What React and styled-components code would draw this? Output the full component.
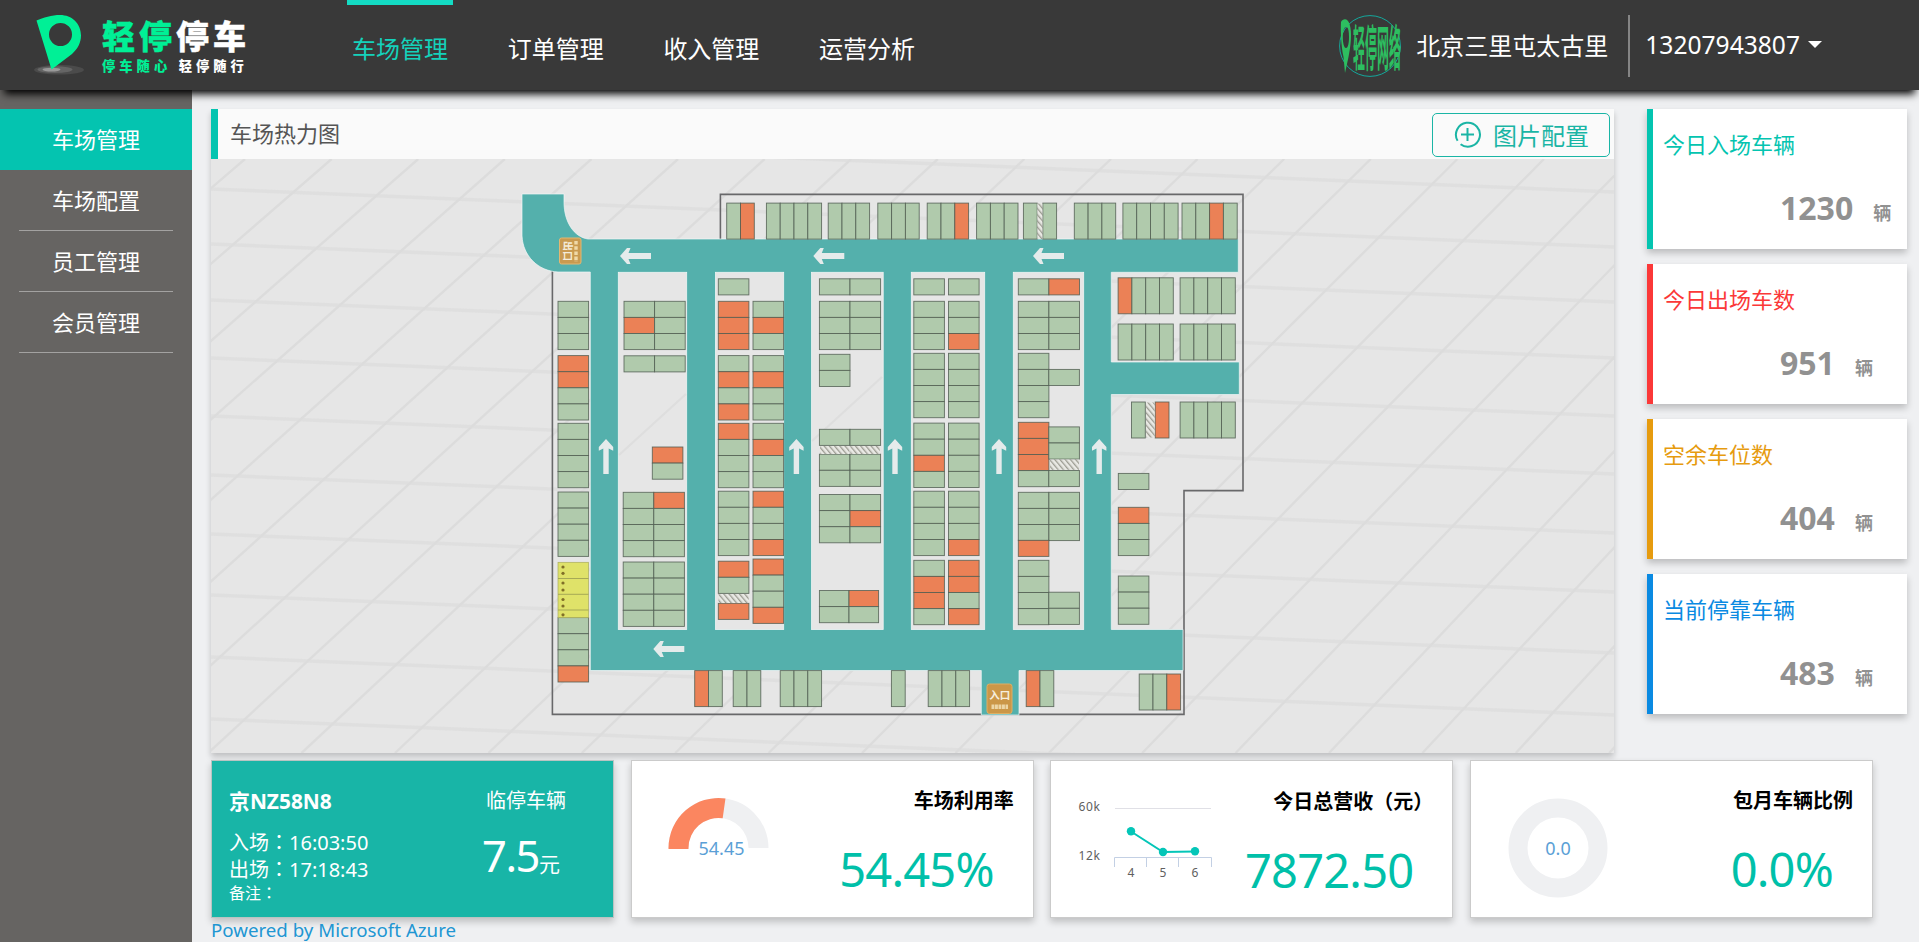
import React from "react";
import styled, { createGlobalStyle } from "styled-components";

const GlobalStyle = createGlobalStyle`
  * { box-sizing: border-box; }
  body {
    margin: 0;
    background: #eff0f2;
    font-family: "Noto Sans", "Noto Sans CJK SC", sans-serif;
    overflow: hidden;
  }
`;

const Page = styled.div`
  display: flex;
  flex-direction: column;
  width: 100%;
  height: 100vh;
  min-height: 942px;
`;

/* ---------- header ---------- */

const Header = styled.header`
  position: relative;
  z-index: 2;
  flex: none;
  display: flex;
  align-items: flex-start;
  height: 90px;
  padding-left: 34px;
  background: #393939;
  box-shadow: 0 8px 8px -4px #000;
`;

const Brand = styled.div`
  display: flex;
  width: 313px;
  padding-top: 14px;
`;

const BrandText = styled.div`
  display: flex;
  flex-direction: column;
  margin-left: 17px;
  font-family: "Noto Sans CJK SC", sans-serif;
  font-weight: 900;
  color: #fff;
  white-space: nowrap;
`;

const BrandName = styled.div`
  height: 43px;
  line-height: 43px;
  font-size: 33px;
  letter-spacing: 4px;
  -webkit-text-stroke: 0.4px currentColor;
`;

const BrandSlogan = styled.div`
  height: 18px;
  line-height: 18px;
  font-size: 13.3px;
  letter-spacing: 4px;
  word-spacing: 0.5px;
`;

const Mint = styled.span`
  color: #00f096;
`;

const Nav = styled.nav`
  display: flex;
  gap: 49.7px;
`;

const NavItem = styled.a`
  width: 106px;
  height: 90px;
  border-top: 5px solid ${(p) => (p.$active ? "#14dcc4" : "transparent")};
  color: ${(p) => (p.$active ? "#14d2bb" : "#fff")};
  font-size: 24px;
  line-height: 88px;
  text-align: center;
  white-space: nowrap;
`;

const Account = styled.div`
  display: flex;
  align-items: center;
  height: 62px;
  margin: 15px 97px 0 auto;
  color: #fff;
  white-space: nowrap;
`;

const Avatar = styled.svg`
  width: 62px;
  height: 62px;
  overflow: visible;
`;

const LotName = styled.div`
  margin: 0 0 0 15px;
  font-size: 24px;
  line-height: 60px;
`;

const Divider = styled.div`
  width: 1.5px;
  height: 62px;
  margin: 0 15.5px 0 20px;
  background: #858585;
`;

const Phone = styled.div`
  margin-top: -2px;
  font-size: 24.6px;
  line-height: 60px;
`;

const Caret = styled.div`
  margin: -3px 0 0 8px;
  border: 7px solid transparent;
  border-top-color: #fff;
  border-bottom: 0;
`;

/* ---------- sidebar ---------- */

const Body = styled.div`
  flex: 1;
  display: flex;
`;

const Sidebar = styled.aside`
  flex: none;
  width: 192px;
  padding-top: 19px;
  background: #666462;
`;

const SideItem = styled.a`
  display: block;
  height: 61px;
  margin: ${(p) => (p.$active ? "0" : "0 19px")};
  border-bottom: 1px solid ${(p) => (p.$active ? "#04c4b0" : "#a3a2a1")};
  background: ${(p) => (p.$active ? "#04c4b0" : "transparent")};
  color: #fff;
  font-size: 22px;
  line-height: 60px;
  text-align: center;
`;

/* ---------- main ---------- */

const Main = styled.main`
  flex: 1;
  display: flex;
  flex-direction: column;
  padding: 19px 12px 0 19px;
`;

const Upper = styled.div`
  display: flex;
  justify-content: space-between;
  height: 644px;
`;

const MapPanel = styled.section`
  width: 1403px;
  box-shadow: 0 4px 6px rgba(0, 0, 0, 0.2);
`;

const MapHead = styled.div`
  display: flex;
  align-items: center;
  justify-content: space-between;
  height: 50px;
  padding: 0 4px 0 12px;
  border-left: 7px solid #04c4b0;
  background: #fafafa;
  color: #555;
  font-size: 22px;
  line-height: 46px;
`;

const MapTitle = styled.span`
  height: 48px;
`;

const ConfigButton = styled.button`
  display: flex;
  align-items: center;
  width: 178px;
  height: 44px;
  margin-top: 2px;
  padding: 0 0 2px 21px;
  border: 1.5px solid #1ab5a5;
  border-radius: 5px;
  background: transparent;
  color: #1ab5a5;
  font-family: inherit;
  font-size: 24px;
  white-space: nowrap;

  svg { flex: none; margin-right: 12px; }
`;

const MapSvg = styled.svg`
  display: block;
  width: 1403px;
  height: 594px;
  background: #e6e6e6;
`;

const Stats = styled.div`
  display: flex;
  flex-direction: column;
  gap: 15px;
  width: 260px;
`;

const StatCard = styled.div`
  height: 140px;
  padding: 17px 0 0 10px;
  border-left: 6px solid ${(p) => p.$color};
  background: #fff;
  box-shadow: 0 4px 7px rgba(0, 0, 0, 0.22);
`;

const StatTitle = styled.div`
  height: 36px;
  color: ${(p) => p.$color};
  font-size: 22px;
  line-height: 36px;
`;

const StatValue = styled.div`
  display: flex;
  align-items: baseline;
  margin-left: 117px;
  height: 60px;
  color: #919191;
  font-size: 32px;
  font-weight: 700;
  line-height: 92px;
`;

const StatUnit = styled.span`
  margin-left: 20px;
  font-size: 18px;
`;

/* ---------- bottom cards ---------- */

const Cards = styled.div`
  display: grid;
  grid-template-columns: repeat(4, 403px);
  justify-content: space-between;
  width: 1662px;
  margin-top: 7px;
`;

const Card = styled.div`
  display: flex;
  justify-content: space-between;
  height: 158px;
  border: 1px solid ${(p) => (p.$filled ? "#b9c4c2" : "#cbcbcb")};
  background: ${(p) => (p.$filled ? "#18b5a7" : "#fff")};
  color: ${(p) => (p.$filled ? "#fff" : "#000")};
  box-shadow: 0 4px 7px rgba(0, 0, 0, 0.2);
`;

/* full-width punctuation centred in its em box */
const Punct = styled.span`
  font-family: "Noto Sans CJK TC", sans-serif;
  font-feature-settings: "chws" 0, "halt" 0;
  text-spacing-trim: space-all;
`;

const Vehicle = styled.div`
  padding: 24px 0 0 17px;
  font-size: 20px;
  line-height: 26px;
  white-space: nowrap;
`;

const Plate = styled.div`
  height: 44px;
  line-height: 32px;
  font-size: 20.9px;
  font-weight: 700;
`;

const Remark = styled.div`
  margin-top: -2px;
  font-size: 16px;
  line-height: 22px;
`;

const Fee = styled.div`
  width: 127px;
  padding-top: 24px;
  font-size: 20px;
  line-height: 32px;
`;

const FeeType = styled.div`
  height: 32px;
`;

const FeeAmount = styled.div`
  margin: 10px 0 0 -4px;
  font-size: 21px;
  line-height: 56px;

  strong {
    font-size: 43.5px;
    font-weight: 400;
    letter-spacing: -1.5px;
  }
`;

const Graphic = styled.svg`
  width: 190px;
  height: 156px;
  flex: none;
`;

const Metric = styled.div`
  display: flex;
  flex-direction: column;
  align-items: flex-end;
  padding: 24px 19px 0 0;
  white-space: nowrap;
`;

const MetricTitle = styled.div`
  font-size: 20px;
  font-weight: 700;
  line-height: 32px;
`;

const MetricValue = styled.div`
  margin: 20px 20px 0 0;
  color: #00c0a9;
  font-size: 47px;
  letter-spacing: -0.8px;
  line-height: 64px;
`;

const Footer = styled.footer`
  color: #2196d2;
  font-size: 18.7px;
  line-height: 24px;
`;

/* ---------- parking map data ---------- */

const CELL_W = 30.6;
const CELL_H = 16.1;
const BAY_W = 13.8;
const BAY_H = 36;

// [x, y, columns, rows, indexes of occupied spaces (row by row)]
const flatSpaces = [
  [558, 301.3, 1, 3],
  [558, 355.6, 1, 4, [0, 1]],
  [558, 423.3, 1, 4],
  [558, 492, 1, 4],
  [558, 617.6, 1, 4, [3]],
  [624, 301.3, 2, 3, [2]],
  [624, 355.8, 2, 1],
  [652.3, 447, 1, 2, [0]],
  [623.2, 492.3, 2, 4, [1]],
  [623.2, 562, 2, 4],
  [718.3, 278.8, 1, 1],
  [718.3, 301.3, 1, 3, [0, 1, 2]],
  [718.3, 355.6, 1, 4, [1, 3]],
  [718.3, 423.3, 1, 4, [0]],
  [718.3, 491.2, 1, 4],
  [718.3, 561.2, 1, 2, [0]],
  [718.3, 603.3, 1, 1, [0]],
  [753, 301.3, 1, 3, [1]],
  [753, 355.6, 1, 4, [1]],
  [753, 423.3, 1, 4, [1]],
  [753, 491.2, 1, 4, [0, 3]],
  [753, 559, 1, 4, [0, 3]],
  [819.4, 278.8, 2, 1],
  [819.4, 301.3, 2, 3],
  [819.4, 354.3, 1, 2],
  [819.4, 429.3, 2, 1],
  [819.4, 454.2, 2, 2],
  [819.4, 494.5, 2, 3, [3]],
  [819.4, 590.5, 2, 2, [1], 29.6],
  [913.8, 278.8, 1, 1],
  [913.8, 301.3, 1, 3],
  [913.8, 353.3, 1, 4],
  [913.8, 423.1, 1, 4, [2]],
  [913.8, 491.2, 1, 4],
  [913.8, 560.3, 1, 4, [1, 2]],
  [948.5, 278.8, 1, 1],
  [948.5, 301.3, 1, 3, [2]],
  [948.5, 353.3, 1, 4],
  [948.5, 423.1, 1, 4],
  [948.5, 491.2, 1, 4, [3]],
  [948.5, 560.3, 1, 4, [0, 1, 3]],
  [1018.3, 278.8, 2, 1, [1]],
  [1018.3, 301.3, 2, 3],
  [1018.3, 353.3, 1, 4],
  [1048.8, 369.4, 1, 1],
  [1018.3, 422.3, 1, 4, [0, 1, 2]],
  [1048.8, 426.9, 1, 2],
  [1048.8, 470.5, 1, 1],
  [1018.3, 492.3, 2, 3],
  [1018.3, 540.3, 1, 1, [0]],
  [1018.3, 560.3, 1, 4],
  [1048.8, 592.2, 1, 2],
  [1118.3, 473.4, 1, 1],
  [1118.3, 507.3, 1, 3, [0]],
  [1118.3, 576, 1, 3],
];

// [x, y, columns, indexes of occupied bays]
const uprightBays = [
  [726.7, 203.1, 2, [1]],
  [766.4, 203.1, 4],
  [828.2, 203.1, 3],
  [877.8, 203.1, 3],
  [927.2, 203.1, 3, [2]],
  [976.6, 203.1, 3],
  [1023.4, 203.1, 1],
  [1042.8, 203.1, 1],
  [1074.3, 203.1, 3],
  [1122.9, 203.1, 4],
  [1182, 203.1, 4, [2]],
  [1118.1, 277.8, 4, [0]],
  [1180.1, 277.8, 4],
  [1118.1, 324, 4],
  [1180.1, 324, 4],
  [1131.5, 402, 1],
  [1155.2, 402, 1, [0]],
  [1180.1, 402, 4],
  [694.7, 670.6, 2, [0]],
  [733.2, 670.6, 2],
  [780.2, 670.6, 3],
  [891.4, 670.6, 1],
  [928.2, 670.6, 3],
  [1026.2, 670.6, 2, [0]],
  [1139.2, 674, 3, [2]],
];

const hatches = [
  [1037.4, 203.5, 5, 35.5],
  [1146, 402.5, 8.6, 35],
  [718.5, 594, 30.2, 9],
  [820, 446, 29.5, 8],
  [850.3, 446, 29.5, 8],
  [1050, 459.5, 29, 10.3],
];

const leftArrows = [[620, 256], [813.3, 256], [1033, 256], [653.3, 649]];
const upArrows = [606, 796.4, 895, 999, 1099.2];

const range = (n) => Array.from({ length: n }, (_, i) => i);

function Block({ x, y, cols, rows, w, h, busy = [] }) {
  return range(rows * cols).map((i) => (
    <rect
      key={i}
      x={x + (i % cols) * w}
      y={y + Math.floor(i / cols) * h}
      width={w}
      height={h}
      fill={busy.includes(i) ? "#eb8156" : "#b0caac"}
      stroke="#4f5c50"
      strokeOpacity="0.85"
      strokeWidth="0.9"
    />
  ));
}

const ARROW = "M0 0 L7 -8 L10.5 -8 L8.5 -3 L31 -3 L31 3 L8.5 3 L10.5 8 L7 8 Z";

function ParkingMap() {
  return (
    <MapSvg viewBox="211 159 1403 594">
      <defs>
        <pattern id="hatch" width="4" height="4" patternUnits="userSpaceOnUse" patternTransform="rotate(-40)">
          <rect width="4" height="4" fill="#e9e9e4" />
          <rect width="1.3" height="4" fill="#9c9c92" />
        </pattern>
      </defs>

      <g stroke="#dcdcdc" fill="none">
        {range(25).map((k) => (
          <line key={k} x1={245 + 86.6 * k} y1="159" x2={395 + 93.4 * (k - 9)} y2="753" strokeWidth="2.4" />
        ))}
        {[146, 201, 256, 312, 370, 428, 487, 546, 607, 669, 731, 793].map((y) => (
          <line key={y} x1="211" y1={y - 12} x2="1614" y2={y + 46} strokeWidth="3.5" strokeOpacity="0.65" />
        ))}
      </g>

      <path
        d="M720.4 239 V194.4 H1243 V490.6 H1184 V714.4 H552.4 V268"
        fill="none"
        stroke="#68686a"
        strokeWidth="1.6"
      />

      <path
        d="M522 194 H564 V202 C564 222 574 237 588 239 H1238.3 V272.3 H1111.3 V362 H1239.3 V394.5 H1111.3 V629.5 H1183 V670.5 H1019 V715 H981.3 V670.5 H590.3 V272 H558 C538 271 523 256 522 236 Z"
        fill="#54b0ac"
        stroke="#f0f6f6"
        strokeWidth="0.7"
      />
      <g fill="#e6e6e6" stroke="#f0f4f4" strokeWidth="0.8">
        {[[618.3, 68.4], [715.5, 68.2], [811.6, 71.6], [911.3, 73.4], [1013.3, 70.4]].map(([x, w]) => (
          <rect key={x} x={x} y="272.3" width={w} height="357.2" />
        ))}
      </g>
      <path d="M619 455 L686 394 M812 441 L882 377" stroke="#dedede" strokeWidth="2.2" />

      {flatSpaces.map(([x, y, cols, rows, busy, w = CELL_W], i) => (
        <Block key={i} x={x} y={y} cols={cols} rows={rows} busy={busy} w={w} h={CELL_H} />
      ))}
      {uprightBays.map(([x, y, cols, busy], i) => (
        <Block key={i} x={x} y={y} cols={cols} rows={1} busy={busy} w={BAY_W} h={BAY_H} />
      ))}
      {hatches.map(([x, y, w, h], i) => (
        <rect key={i} x={x} y={y} width={w} height={h} fill="url(#hatch)" />
      ))}

      <rect x="558" y="562.3" width="30.5" height="55.3" fill="#dfe269" stroke="#a9ad5c" strokeWidth="0.7" />
      <path d="M558 578.5 H588.5 M558 594.3 H588.5 M558 610 H588.5" stroke="#9fa354" strokeWidth="0.9" />
      <g fill="#806f28">
        {[567, 573.3, 583, 590, 599.5, 606, 614.8].map((y) => (
          <circle key={y} cx="563" cy={y} r="1.6" />
        ))}
      </g>

      <g fill="#e5ebeb">
        {leftArrows.map(([x, y]) => (
          <path key={x} d={ARROW} transform={`translate(${x} ${y})`} />
        ))}
        {upArrows.map((x) => (
          <path key={x} d={ARROW} transform={`translate(${x} 439) rotate(90) scale(1.13 .9)`} />
        ))}
      </g>

      <g>
        <rect x="559.5" y="238" width="21.5" height="26" rx="2" fill="#c99a50" stroke="#e2b873" />
        <text
          transform="translate(564 251) rotate(90)"
          textAnchor="middle"
          fontSize="10"
          fontWeight="700"
          fill="#f4ecd9"
        >
          出口
        </text>
        <path d="M576 241 V262" stroke="#efd9a8" strokeWidth="3.4" strokeDasharray="3.6 1.6" />
        <rect x="987" y="684" width="25" height="29.5" rx="2.5" fill="#cb9748" stroke="#dfae62" />
        <text x="999.7" y="698.5" textAnchor="middle" fontSize="10.5" fontWeight="700" fill="#f6eedd">
          入口
        </text>
        <path d="M991.5 706.8 H1008" stroke="#ecd6a6" strokeWidth="4.6" strokeDasharray="2.9 0.6" />
      </g>
    </MapSvg>
  );
}

/* ---------- drawings ---------- */

function PinLogo() {
  return (
    <svg width="51" height="61" viewBox="34 14 51 61">
      <ellipse cx="59" cy="69.8" rx="25" ry="4.8" fill="#4b4b4b" />
      <ellipse cx="55" cy="69.6" rx="17.5" ry="3.4" fill="#656565" />
      <ellipse cx="51.5" cy="69.6" rx="9" ry="1.9" fill="#999" />
      <path
        fillRule="evenodd"
        fill="#00f096"
        d="M36.5 20.5 C43 17.5 52 15 60 15 C72 15 81 23.5 81 35.5 C81 43 77.5 49 72 54 L51.5 69.5 Z M60.5 23 A11.5 11.5 0 1 0 60.5 46 A11.5 11.5 0 1 0 60.5 23 Z"
      />
    </svg>
  );
}

function LotBadge() {
  return (
    <Avatar viewBox="0 0 62 62">
      <circle cx="31" cy="31" r="30.4" fill="none" stroke="#14a89c" strokeWidth="1" />
      <path
        fillRule="evenodd"
        fill="#2dbe60"
        d="M2 7 C4 3 9 3 10.5 9 C13.5 18 11.5 32 9.5 42 L6 58 L4.5 42 C2 30 1.5 16 2 7 Z M7 12 C4.5 12 3.8 19 3.8 22 C3.8 28 5 33 7 33 C9 33 10 28 10 22 C10 17 9.5 12 7 12 Z"
      />
      <text
        transform="translate(14 50.5) scale(1 4.1)"
        fontSize="12"
        fontWeight="700"
        fill="#2dbe60"
        fontFamily="Noto Sans CJK SC, sans-serif"
      >
        轻停网络
      </text>
    </Avatar>
  );
}

function PlusIcon() {
  return (
    <svg width="27" height="27" viewBox="0 0 27 27" fill="none" stroke="currentColor" strokeWidth="2">
      <path d="M3.6 19.8 A12 12 0 1 1 6.6 23.2" />
      <path d="M13.5 7 V20 M7 13.5 H20" />
    </svg>
  );
}

function Gauge() {
  const angle = Math.PI * (1 - 0.5445);
  const point = (r) => `${86.5 + r * Math.cos(angle)} ${87 - r * Math.sin(angle)}`;
  return (
    <Graphic viewBox="0 0 190 156">
      <path d="M36.5 87 A50 50 0 0 1 136.5 87 H116.5 A30 30 0 0 0 56.5 87 Z" fill="#eff0f2" />
      <path d={`M36.5 88 V87 A50 50 0 0 1 ${point(50)} L${point(30)} A30 30 0 0 0 56.5 87 V88 Z`} fill="#fb8660" />
      <text x="89.5" y="94" textAnchor="middle" fontSize="18" fill="#5b9fd6">54.45</text>
    </Graphic>
  );
}

function Trend() {
  return (
    <Graphic viewBox="0 0 190 156">
      <path d="M64 47.5 H160" stroke="#e0e0e6" />
      <path d="M63.5 106 V96.5 H160.5 V106 M95.5 96.5 V106 M127.5 96.5 V106" fill="none" stroke="#c3d0e4" />
      <path d="M80 70.5 L112 91 L144 90.5" fill="none" stroke="#04c6b8" strokeWidth="2" />
      <g fill="#04c6b8">
        <circle cx="80" cy="70.3" r="4.2" />
        <circle cx="112" cy="91" r="4.2" />
        <circle cx="144" cy="90.3" r="4.2" />
      </g>
      <g fontSize="12" fill="#606060">
        <text x="49.5" y="49.5" textAnchor="end" letterSpacing="0.6">60k</text>
        <text x="49.5" y="98.5" textAnchor="end" letterSpacing="0.6">12k</text>
        <text x="80" y="115.5" textAnchor="middle">4</text>
        <text x="112" y="115.5" textAnchor="middle">5</text>
        <text x="144" y="115.5" textAnchor="middle">6</text>
      </g>
    </Graphic>
  );
}

function Ring() {
  return (
    <Graphic viewBox="0 0 190 156">
      <circle cx="87" cy="87" r="40" fill="none" stroke="#eff0f2" strokeWidth="19" />
      <text x="87" y="94" textAnchor="middle" fontSize="18" fill="#5b9fd6">0.0</text>
    </Graphic>
  );
}

/* ---------- page ---------- */

const navItems = ["车场管理", "订单管理", "收入管理", "运营分析"];
const sideItems = ["车场管理", "车场配置", "员工管理", "会员管理"];
const stats = [
  { title: "今日入场车辆", value: 1230, color: "#04c4b0" },
  { title: "今日出场车数", value: 951, color: "#fb3838" },
  { title: "空余车位数", value: 404, color: "#e69b0f" },
  { title: "当前停靠车辆", value: 483, color: "#0a8ae2" },
];
const metrics = [
  { id: "usage", title: "车场利用率", value: "54.45%", graphic: Gauge },
  {
    id: "income",
    title: <>今日总营收<Punct>（</Punct>元<Punct>）</Punct></>,
    value: "7872.50",
    graphic: Trend,
  },
  { id: "monthly", title: "包月车辆比例", value: "0.0%", graphic: Ring },
];

export default function App() {
  return (
    <Page>
      <GlobalStyle />
      <Header>
        <Brand>
          <PinLogo />
          <BrandText>
            <BrandName><Mint>轻停</Mint>停车</BrandName>
            <BrandSlogan><Mint>停车随心</Mint> 轻停随行</BrandSlogan>
          </BrandText>
        </Brand>
        <Nav>
          {navItems.map((label, i) => (
            <NavItem key={label} $active={i === 0}>{label}</NavItem>
          ))}
        </Nav>
        <Account>
          <LotBadge />
          <LotName>北京三里屯太古里</LotName>
          <Divider />
          <Phone>13207943807</Phone>
          <Caret />
        </Account>
      </Header>
      <Body>
        <Sidebar>
          {sideItems.map((label, i) => (
            <SideItem key={label} $active={i === 0}>{label}</SideItem>
          ))}
        </Sidebar>
        <Main>
          <Upper>
            <MapPanel>
              <MapHead>
                <MapTitle>车场热力图</MapTitle>
                <ConfigButton><PlusIcon />图片配置</ConfigButton>
              </MapHead>
              <ParkingMap />
            </MapPanel>
            <Stats>
              {stats.map((s) => (
                <StatCard key={s.title} $color={s.color}>
                  <StatTitle $color={s.color}>{s.title}</StatTitle>
                  <StatValue>{s.value}<StatUnit>辆</StatUnit></StatValue>
                </StatCard>
              ))}
            </Stats>
          </Upper>
          <Cards>
            <Card $filled>
              <Vehicle>
                <Plate>京NZ58N8</Plate>
                <div>入场<Punct>：</Punct>16:03:50</div>
                <div>出场<Punct>：</Punct>17:18:43</div>
                <Remark>备注<Punct>：</Punct></Remark>
              </Vehicle>
              <Fee>
                <FeeType>临停车辆</FeeType>
                <FeeAmount><strong>7.5</strong>元</FeeAmount>
              </Fee>
            </Card>
            {metrics.map(({ id, title, value, graphic: Drawing }) => (
              <Card key={id}>
                <Drawing />
                <Metric>
                  <MetricTitle>{title}</MetricTitle>
                  <MetricValue>{value}</MetricValue>
                </Metric>
              </Card>
            ))}
          </Cards>
          <Footer>Powered by Microsoft Azure</Footer>
        </Main>
      </Body>
    </Page>
  );
}
